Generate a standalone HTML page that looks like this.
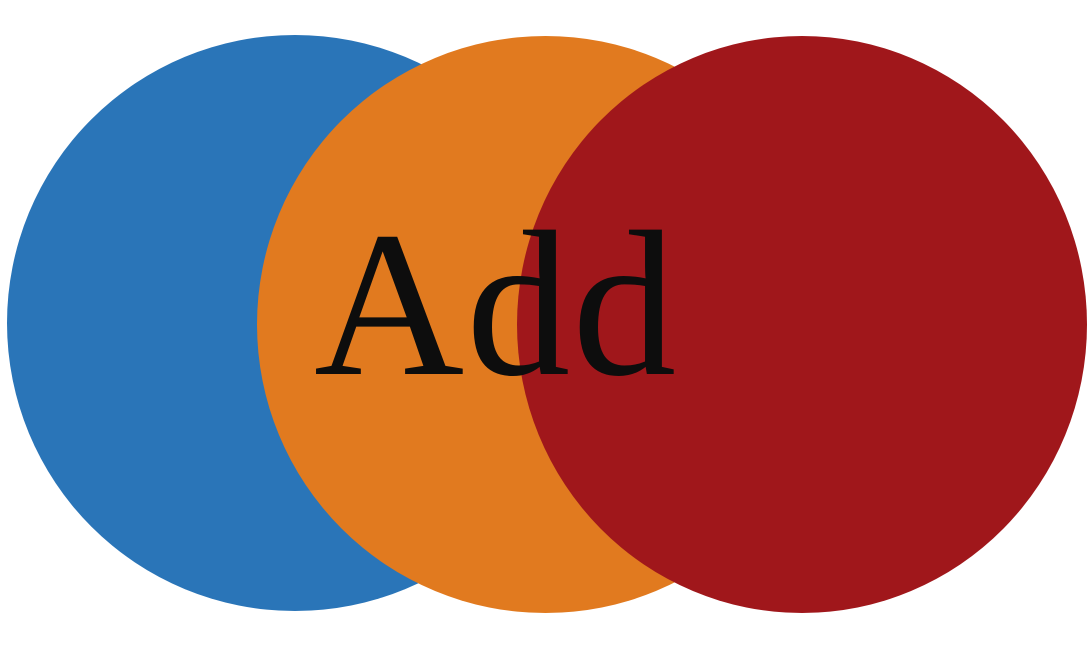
<!DOCTYPE html>
<html><head><meta charset="utf-8"><style>
html,body{margin:0;padding:0;background:#fff;width:1087px;height:652px;overflow:hidden;position:relative}
.c{position:absolute;border-radius:50%}
.t{position:absolute;left:314px;top:200px;font-family:"Liberation Serif",serif;font-size:208px;line-height:1;color:#0d0d0d;letter-spacing:2px}
</style></head><body>
<div class="c" style="left:7px;top:35px;width:576px;height:576px;background:#2a75b8"></div>
<div class="c" style="left:257px;top:36px;width:577px;height:577px;background:#e17a1f"></div>
<div class="c" style="left:517px;top:36px;width:570px;height:577px;background:#a0171b"></div>
<div class="t">Add</div>
</body></html>
